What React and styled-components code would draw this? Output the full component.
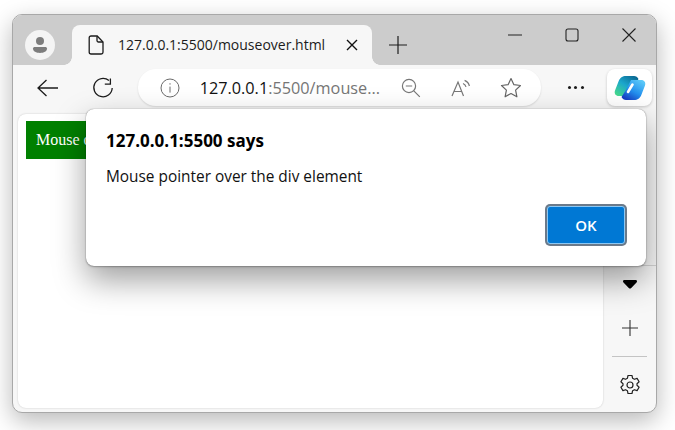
import React from "react";
import styled, { createGlobalStyle } from "styled-components";

const GlobalStyle = createGlobalStyle`
	html, body {
		margin: 0;
		padding: 0;
		background: #ffffff;
	}
	body {
		width: 675px;
		height: 430px;
		overflow: hidden;
		font-family: "Open Sans", "Noto Sans", sans-serif;
	}
`;

const App = () => {
	return (
		<>
			<GlobalStyle />
			<BrowserWindow>
				{/* 탭 영역 */}
				<TitleBar>
					<Avatar>
						<svg width="20" height="20" viewBox="0 0 20 20">
							<circle cx="10" cy="6" r="4" fill="#7d7d7d" />
							<path d="M3 13.6c0-1 .8-1.600 1.700-1.600h10.600c.9 0 1.700.6 1.700 1.600 0 3-3.200 4.400-7 4.400s-7-1.400-7-4.400z" fill="#7d7d7d" />
						</svg>
					</Avatar>
					<Tab>
						<svg width="16" height="20" viewBox="0 0 16 20" fill="none" stroke="#1c1c1c" strokeWidth="1.3">
							<path d="M3 1h6.200L15 7v10.200c0 1-.8 1.800-1.800 1.800H3c-1 0-1.800-.8-1.800-1.800V2.800C1.200 1.800 2 1 3 1z" />
							<path d="M9 1.200v4.300c0 .9.6 1.500 1.500 1.500H15" />
						</svg>
						<TabTitle>127.0.0.1:5500/mouseover.html</TabTitle>
						<TabClose>
							<svg width="12" height="12" viewBox="0 0 12 12" stroke="#111" strokeWidth="1.4">
								<path d="M1 1l10 10M11 1L1 11" />
							</svg>
						</TabClose>
					</Tab>
					<NewTab>
						<svg width="18" height="18" viewBox="0 0 18 18" stroke="#1c1c1c" strokeWidth="1.2">
							<path d="M9 0v18M0 9h18" />
						</svg>
					</NewTab>
					<WindowControls>
						<WindowButton>
							<svg width="14" height="14" viewBox="0 0 14 14" stroke="#222" strokeWidth="1.1">
								<path d="M0 7h14" />
							</svg>
						</WindowButton>
						<WindowButton>
							<svg width="14" height="14" viewBox="0 0 14 14" fill="none" stroke="#222" strokeWidth="1.1">
								<rect x="1" y="1" width="12" height="12" rx="2" />
							</svg>
						</WindowButton>
						<WindowButton>
							<svg width="14" height="14" viewBox="0 0 14 14" stroke="#222" strokeWidth="1.1">
								<path d="M.5.5l13 13M13.500.5l-13 13" />
							</svg>
						</WindowButton>
					</WindowControls>
				</TitleBar>

				{/* 주소창 */}
				<Toolbar>
					<NavButton>
						<svg width="22" height="18" viewBox="0 0 22 18" fill="none" stroke="#1c1c1c" strokeWidth="1.3">
							<path d="M1 9h20M9.500 1L1 9l8.500 8" />
						</svg>
					</NavButton>
					<NavButton>
						<svg width="22" height="22" viewBox="0 0 22 22" fill="none" stroke="#1c1c1c" strokeWidth="1.3">
							<path d="M17 3.600A9.200 9.200 0 1 0 20.200 11" />
							<path d="M12.800 7.200h5.600V1.600" />
						</svg>
					</NavButton>
					<AddressBar>
						<svg width="20" height="20" viewBox="0 0 20 20" fill="none" stroke="#6a6a6a" strokeWidth="1">
							<circle cx="10" cy="10" r="9" />
							<path d="M10 8.600v6M10 5.200v1.400" />
						</svg>
						<Url>
							<UrlHost>127.0.0.1</UrlHost>:5500/mouse...
						</Url>
						<AddressIcons>
							<svg width="20" height="20" viewBox="0 0 20 20" fill="none" stroke="#777" strokeWidth="1.2">
								<circle cx="8" cy="8" r="6.600" />
								<path d="M4.800 8h6.400M12.800 12.800l6 6" />
							</svg>
							<svg width="20" height="20" viewBox="0 0 20 20" fill="none" stroke="#777" strokeWidth="1.2">
								<path d="M1 18L7 4l5.500 14M3 13.500h8" />
								<path d="M12 5.500c1.500.6 2.600 1.800 3 3.400M13.600 2.400c2.400 1 4.200 3 4.800 5.600" />
							</svg>
							<svg width="22" height="22" viewBox="0 0 22 22" fill="none" stroke="#666" strokeWidth="1.2" strokeLinejoin="round">
								<path d="M11 1.500l2.900 6.200 6.600.8-4.900 4.600 1.300 6.700-5.900-3.300-5.900 3.300 1.300-6.700L1.500 8.500l6.600-.8z" />
							</svg>
						</AddressIcons>
					</AddressBar>
					<MoreButton>
						<Dot />
						<Dot />
						<Dot />
					</MoreButton>
					<CopilotButton>
						<svg width="32" height="26" viewBox="0 0 32 26">
							<defs>
								<linearGradient id="copilotLeft" x1="0.1" y1="0.9" x2="0.8" y2="0">
									<stop offset="0" stopColor="#43d690" />
									<stop offset="0.5" stopColor="#1ba6cc" />
									<stop offset="1" stopColor="#0b6a94" />
								</linearGradient>
								<linearGradient id="copilotRight" x1="0.25" y1="1" x2="0.9" y2="0.1">
									<stop offset="0" stopColor="#1640c4" />
									<stop offset="0.45" stopColor="#2490ee" />
									<stop offset="1" stopColor="#5ac8f8" />
								</linearGradient>
							</defs>
							<path d="M12 1h8c2 0 3.500 1 4.500 3L20 11 15 21H5C1.500 21 0 18.500 1 15.500l3.500-9C6 2.500 8.500 1 12 1z" fill="url(#copilotLeft)" />
							<path d="M20 25h-8c-2 0-3.500-1-4.500-3L12 15 17 5h10c3.500 0 5 2.500 4 5.500l-3.500 9C26 23.500 23.500 25 20 25z" fill="url(#copilotRight)" />
							<path d="M18.500 9.500L14 17" stroke="#ffffff" strokeWidth="2.600" strokeLinecap="round" />
						</svg>
					</CopilotButton>
				</Toolbar>

				{/* 본문 */}
				<Body>
					<Page>
						<HoverBox>Mouse o</HoverBox>
					</Page>
					<SideBar>
						<ArrowButton>
							<svg width="14" height="9" viewBox="0 0 14 9">
								<path d="M0 1.400C0 .6.5 0 1.400 0h11.200c.9 0 1.400.6 1.400 1.400 0 .4-.2.8-.5 1.100L8 8.200c-.6.5-1.400.5-2 0L.5 2.500C.2 2.200 0 1.800 0 1.400z" fill="#000" />
							</svg>
						</ArrowButton>
						<SideButton>
							<svg width="16" height="16" viewBox="0 0 16 16" stroke="#333" strokeWidth="1.1">
								<path d="M8 0v16M0 8h16" />
							</svg>
						</SideButton>
						<SideDivider />
						<SideButton>
							<svg width="22" height="22" viewBox="0 0 22 22" fill="none" stroke="#222" strokeWidth="1.2" strokeLinejoin="round">
								<circle cx="11" cy="11" r="3" />
								<path d="M9 1.500h4l.6 2.800 1.800 1 2.700-.9 2 3.400-2.100 1.900v1.600l2.100 1.900-2 3.400-2.700-.9-1.800 1-.6 2.800H9l-.6-2.800-1.800-1-2.700.9-2-3.400 2.100-1.900v-1.600L1.900 7.800l2-3.400 2.700.9 1.800-1z" />
							</svg>
						</SideButton>
					</SideBar>
				</Body>

				{/* alert */}
				<Dialog>
					<DialogTitle>127.0.0.1:5500 says</DialogTitle>
					<DialogMessage>Mouse pointer over the div element</DialogMessage>
					<DialogFooter>
						<OkButton>OK</OkButton>
					</DialogFooter>
				</Dialog>
			</BrowserWindow>
		</>
	);
};

export default App;

const BrowserWindow = styled.div`
	position: relative;
	box-sizing: border-box;
	width: 645px;
	height: 399px;
	margin: 14px 0 0 12px;
	display: flex;
	flex-direction: column;
	background: #f7f7f7;
	border: 1px solid #a8a8a8;
	border-radius: 10px;
	box-shadow: 0 8px 24px rgba(0, 0, 0, 0.28);
	overflow: hidden;
`;

const TitleBar = styled.div`
	height: 50px;
	flex-shrink: 0;
	display: flex;
	align-items: flex-end;
	background: #cccccc;
	padding-left: 12px;
`;

const Avatar = styled.div`
	width: 30px;
	height: 30px;
	margin: 0 17px 5px 0;
	flex-shrink: 0;
	display: flex;
	align-items: center;
	justify-content: center;
	border-radius: 50%;
	background: #f4f4f4;
`;

const Tab = styled.div`
	position: relative;
	box-sizing: border-box;
	width: 300px;
	height: 40px;
	padding: 0 14px 0 16px;
	display: flex;
	align-items: center;
	background: #f7f7f7;
	border-radius: 8px 8px 0 0;

	&::before,
	&::after {
		content: "";
		position: absolute;
		bottom: 0;
		width: 8px;
		height: 8px;
		background: radial-gradient(circle at var(--corner), #cccccc 7.5px, #f7f7f7 8px);
	}
	&::before {
		--corner: 0 0;
		left: -8px;
	}
	&::after {
		--corner: 100% 0;
		right: -8px;
	}
`;

const TabTitle = styled.span`
	flex: 1;
	margin-left: 14px;
	font-size: 14px;
	line-height: 20px;
	color: #1c1c1c;
	white-space: nowrap;
`;

const TabClose = styled.span`
	display: flex;
`;

const NewTab = styled.div`
	display: flex;
	margin: 0 0 11px 17px;
`;

const WindowControls = styled.div`
	display: flex;
	align-self: flex-start;
	margin: 12px -1px 0 auto;
`;

const WindowButton = styled.div`
	width: 57px;
	height: 16px;
	display: flex;
	align-items: center;
	justify-content: center;
`;

const Toolbar = styled.div`
	height: 45px;
	flex-shrink: 0;
	display: flex;
	align-items: center;
	padding: 0 4px 0 8px;
`;

const NavButton = styled.div`
	width: 55px;
	display: flex;
	justify-content: center;
`;

const AddressBar = styled.div`
	box-sizing: border-box;
	width: 405px;
	height: 37px;
	margin-left: 7px;
	padding: 0 19px 0 22px;
	display: flex;
	align-items: center;
	background: #ffffff;
	border-radius: 18px;
	box-shadow: 0 1px 2px rgba(0, 0, 0, 0.12);
`;

const Url = styled.span`
	margin-left: 20px;
	font-size: 16.25px;
	line-height: 22px;
	color: #767676;
	white-space: nowrap;
`;

const UrlHost = styled.span`
	color: #111111;
`;

const AddressIcons = styled.div`
	margin-left: auto;
	display: flex;
	align-items: center;
	gap: 29.5px;
`;

const MoreButton = styled.div`
	box-sizing: border-box;
	width: 66px;
	padding-left: 3px;
	display: flex;
	justify-content: center;
	gap: 3.5px;
`;

const Dot = styled.span`
	width: 3px;
	height: 3px;
	border-radius: 50%;
	background: #1c1c1c;
`;

const CopilotButton = styled.div`
	width: 45px;
	height: 37px;
	display: flex;
	align-items: center;
	justify-content: center;
	background: #ffffff;
	border-radius: 8px;
	box-shadow: 0 1px 3px rgba(0, 0, 0, 0.2);
`;

const Body = styled.div`
	flex: 1;
	display: flex;
	min-height: 0;
	padding-left: 5px;
`;

const Page = styled.div`
	width: 585px;
	margin: 4px 0 4px;
	padding: 7px 8px;
	box-sizing: border-box;
	background: #ffffff;
	border-radius: 8px;
	box-shadow: 0 0 2px rgba(0, 0, 0, 0.2);
`;

const HoverBox = styled.div`
	width: 200px;
	height: 38px;
	padding: 0 10px;
	box-sizing: border-box;
	display: flex;
	align-items: center;
	background: #008000;
	color: #ffffff;
	font-family: "Liberation Serif", serif;
	font-size: 16px;
`;

const SideBar = styled.div`
	flex: 1;
	display: flex;
	flex-direction: column;
	align-items: center;
	justify-content: flex-end;
	padding-bottom: 5px;
`;

const SideButton = styled.div`
	height: 44px;
	display: flex;
	align-items: center;
	justify-content: center;
`;

const ArrowButton = styled(SideButton)`
	box-sizing: border-box;
	height: 41px;
	align-self: stretch;
	padding-bottom: 4px;
	border-top: 1px solid #d4d4d4;
`;

const SideDivider = styled.div`
	width: 35px;
	height: 1px;
	margin: 6px 0;
	background: #c4c4c4;
`;

const Dialog = styled.div`
	position: absolute;
	left: 73px;
	top: 94px;
	box-sizing: border-box;
	width: 560px;
	height: 157px;
	padding: 20px 20px 0;
	background: #ffffff;
	border-radius: 8px;
	box-shadow: 0 0 1px rgba(0, 0, 0, 0.5), 0 1px 2px rgba(0, 0, 0, 0.25), 0 14px 32px rgba(0, 0, 0, 0.38);
`;

const DialogTitle = styled.div`
	font-size: 17px;
	font-weight: 700;
	line-height: 24px;
	color: #000000;
`;

const DialogMessage = styled.div`
	margin-top: 14px;
	font-size: 15.4px;
	line-height: 20px;
	color: #111111;
`;

const DialogFooter = styled.div`
	display: flex;
	justify-content: flex-end;
	margin-top: 19px;
`;

const OkButton = styled.div`
	box-sizing: border-box;
	width: 78px;
	height: 38px;
	display: flex;
	align-items: center;
	justify-content: center;
	background: #0078d4;
	color: #ffffff;
	font-size: 15px;
	font-weight: 600;
	border: 1px solid #8cc8f4;
	border-radius: 3px;
	box-shadow: 0 0 0 2px #6b7a8a;
	margin-right: 1px;
`;
